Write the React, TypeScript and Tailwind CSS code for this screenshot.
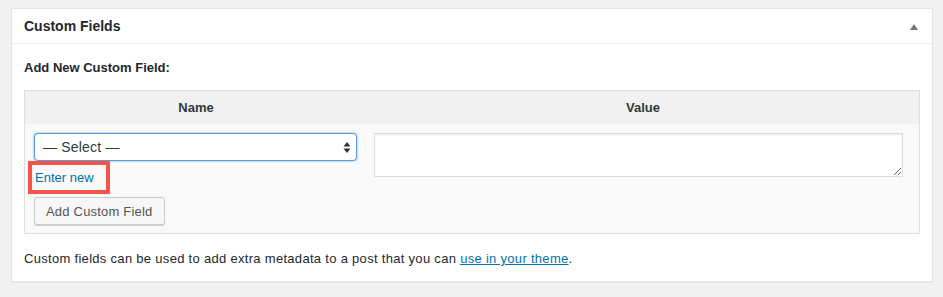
import React from "react";

export default function App() {
  const font = { fontFamily: '"Liberation Sans", Arial, sans-serif' };
  return (
    <div className="min-h-[297px] w-[943px] bg-[#f1f1f1] pt-[8px] pl-[11px] pr-[10px] pb-[16px]" style={font}>
      <div className="border border-[#e5e5e5] bg-white shadow-[0_1px_1px_rgba(0,0,0,0.04)]">
        <div className="flex h-[35px] items-center justify-between border-b border-[#eeeeee] pl-[12px] pr-[14px]">
          <h2 className="text-[14px] font-bold leading-none text-[#23282d]">Custom Fields</h2>
          <svg width="8" height="6" viewBox="0 0 8 6" className="mt-[1px]">
            <polygon points="4,0 8,6 0,6" fill="#72777c" />
          </svg>
        </div>
        <div className="px-[12px] pt-[15px] pb-[13px]">
          <p className="text-[13px] font-bold leading-[18px] text-[#23282d]">Add New Custom Field:</p>
          <div className="mt-[13px] border border-[#dfdfdf] bg-[#f9f9f9]">
            <div className="flex h-[33px] items-center bg-[#f1f1f1] text-[13px] font-bold text-[#32373c]">
              <div className="w-[342px] text-center">Name</div>
              <div className="flex-1 text-center">Value</div>
            </div>
            <div className="flex pt-[9px] pb-[8px]">
              <div className="flex w-[342px] flex-col items-start pl-[9px] pr-[10px]">
                <div className="flex h-[28px] w-full items-center justify-between rounded-[4px] border border-[#5b9dd9] bg-white pl-[8px] pr-[5px] shadow-[0_0_2px_rgba(30,140,190,0.8)]">
                  <span className="text-[14px] tracking-[0.2px] text-[#32373c]">— Select —</span>
                  <svg width="8" height="13" viewBox="0 0 8 13">
                    <polygon points="4,1 7.5,5.5 0.5,5.5" fill="#333" />
                    <polygon points="4,12 7.5,7.5 0.5,7.5" fill="#333" />
                  </svg>
                </div>
                <div className="-ml-[6px] flex h-[33px] w-[82px] items-center border-[4px] border-[#f5544a] pl-[3px]">
                  <a href="#" className="text-[13px] text-[#0073aa]">Enter new</a>
                </div>
                <button className="mt-[3px] h-[28px] rounded-[3px] border border-[#cccccc] bg-[#f7f7f7] px-[11px] text-[13px] leading-none tracking-[0.2px] text-[#555555] shadow-[0_1px_0_#cccccc]">
                  Add Custom Field
                </button>
              </div>
              <div className="flex-1 pl-[7px] pr-[16px]">
                <textarea className="block h-[44px] w-full border border-[#dddddd] bg-white shadow-[inset_0_1px_2px_rgba(0,0,0,0.07)] outline-none" />
              </div>
            </div>
          </div>
          <p className="mt-[16px] text-[13px] leading-[18px] tracking-[0.3px] text-[#23282d]">
            Custom fields can be used to add extra metadata to a post that you can{" "}
            <a href="#" className="text-[#0073aa] underline">use in your theme</a>.
          </p>
        </div>
      </div>
    </div>
  );
}
